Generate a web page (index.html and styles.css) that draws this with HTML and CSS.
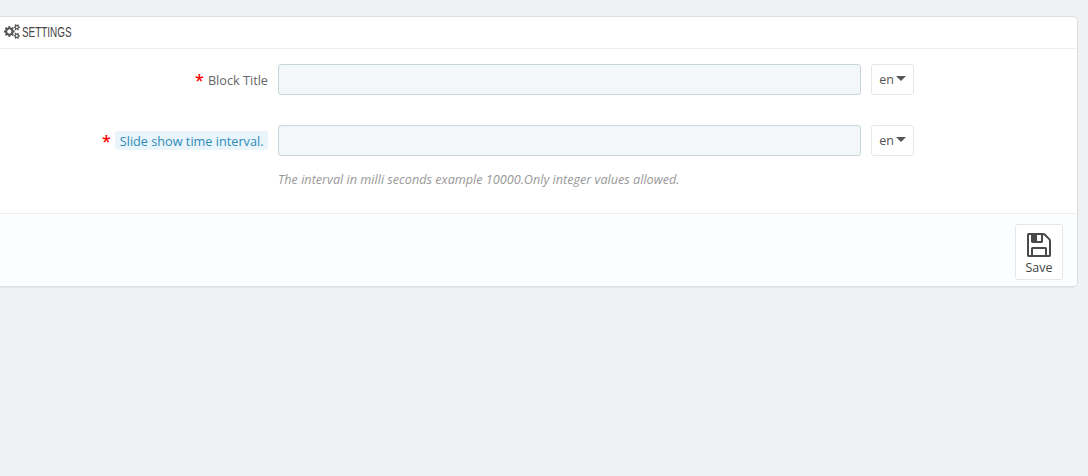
FILE: index.html
```html
<!DOCTYPE html>
<html lang="en">
<head>
<meta charset="utf-8">
<title>Settings</title>
<link rel="stylesheet" href="styles.css">
</head>
<body>
<div class="panel">
  <div class="panel-heading">
    <svg class="icon-cogs" viewBox="0 0 1920 1792" aria-hidden="true"><path fill-rule="evenodd" d="M896 896q0-106-75-181t-181-75-181 75-75 181 75 181 181 75 181-75 75-181zm768 512q0-52-38-90t-90-38-90 38-38 90q0 53 37.500 90.500t90.500 37.500 90.500-37.500 37.500-90.500zm0-1024q0-52-38-90t-90-38-90 38-38 90q0 53 37.500 90.500t90.500 37.500 90.500-37.500 37.500-90.500zm-384 421v185q0 10-7 19.500t-16 10.500l-155 24q-11 35-32 76 34 48 90 115 7 11 7 20 0 12-7 19-23 30-82.500 89.500t-78.500 59.500q-11 0-21-7l-115-90q-37 19-77 31-11 108-23 155-7 24-30 24h-186q-11 0-20-7.500t-10-17.500l-23-153q-34-10-75-31l-118 89q-7 7-20 7-11 0-21-8-144-133-144-160 0-9 7-19 10-14 41-53t47-61q-23-44-35-82l-152-24q-10-1-17-9.500t-7-19.500v-185q0-10 7-19.500t16-10.500l155-24q11-35 32-76-34-48-90-115-7-11-7-20 0-12 7-20 22-30 82-89t79-59q11 0 21 7l115 90q34-18 77-32 11-108 23-154 7-24 30-24h186q11 0 20 7.500t10 17.500l23 153q34 10 75 31l118-89q8-7 20-7 11 0 21 8 144 133 144 160 0 8-7 19-12 16-42 54t-45 60q23 48 34 82l152 23q10 2 17 10.500t7 19.500zm640 533v140q0 16-149 31-12 27-30 52 51 113 51 138 0 4-4 7-122 71-124 71-8 0-46-47t-52-68q-20 2-30 2t-30-2q-14 21-52 68t-46 47q-2 0-124-71-4-3-4-7 0-25 51-138-18-25-30-52-149-15-149-31v-140q0-16 149-31 13-29 30-52-51-113-51-138 0-4 4-7 4-2 35-20t59-34 30-16q8 0 46 46.500t52 67.500q20-2 30-2t30 2q51-71 92-112l6-2q4 0 124 70 4 3 4 7 0 25-51 138 17 23 30 52 149 15 149 31zm0-1024v140q0 16-149 31-12 27-30 52 51 113 51 138 0 4-4 7-122 71-124 71-8 0-46-47t-52-68q-20 2-30 2t-30-2q-14 21-52 68t-46 47q-2 0-124-71-4-3-4-7 0-25 51-138-18-25-30-52-149-15-149-31v-140q0-16 149-31 13-29 30-52-51-113-51-138 0-4 4-7 4-2 35-20t59-34 30-16q8 0 46 46.500t52 67.500q20-2 30-2t30 2q51-71 92-112l6-2q4 0 124 70 4 3 4 7 0 25-51 138 17 23 30 52 149 15 149 31z"/></svg>
    <span class="heading-text">SETTINGS</span>
  </div>
  <div class="form-body">
    <div class="form-row">
      <label class="form-label"><span class="req">*</span><span>Block Title</span></label>
      <input class="form-input" type="text">
      <button class="lang-btn" type="button">en<span class="caret"></span></button>
    </div>
    <div class="form-row">
      <label class="form-label"><span class="req">*</span><span class="hint-label">Slide show time interval.</span></label>
      <input class="form-input" type="text">
      <button class="lang-btn" type="button">en<span class="caret"></span></button>
      <p class="help">The interval in milli seconds example 10000.Only integer values allowed.</p>
    </div>
  </div>
  <div class="panel-footer">
    <button class="save-btn" type="button">
      <svg class="icon-save" viewBox="128 128 1536 1536" aria-hidden="true"><path d="M512 1536h768v-384h-768v384zm896 0h128v-896q0-14-10-38.500t-20-34.500l-281-281q-10-10-34-20t-39-10v416q0 40-28 68t-68 28h-576q-40 0-68-28t-28-68v-416h-128v1280h128v-416q0-40 28-68t68-28h832q40 0 68 28t28 68v416zm-384-928v-320q0-13-9.500-22.500t-22.500-9.500h-192q-13 0-22.500 9.500t-9.500 22.500v320q0 13 9.500 22.500t22.500 9.500h192q13 0 22.500-9.500t9.500-22.500zm640 32v928q0 40-28 68t-68 28h-1344q-40 0-68-28t-28-68v-1344q0-40 28-68t68-28h928q40 0 88 20t76 48l280 280q28 28 48 76t20 88z"/></svg>
      <span>Save</span>
    </button>
  </div>
</div>
</body>
</html>
```
FILE: styles.css
```css
* { box-sizing: border-box; }
html, body { height: 100%; }
body {
  margin: 0;
  padding-top: 16px;
  background: #eff1f2;
  font-family: "Open Sans", sans-serif;
  font-size: 12px;
  color: #555;
  overflow: hidden;
}
.panel {
  margin: 0 10px 0 -10px;
  height: 271px;
  background: #fff;
  border: 1px solid #dcdfe2;
  border-radius: 5px;
  box-shadow: 0 1px 0 rgba(0,0,0,0.04);
  display: flex;
  flex-direction: column;
  overflow: hidden;
}
.panel-heading {
  height: 32px;
  flex: none;
  border-bottom: 1px solid #eeeeee;
  display: flex;
  align-items: center;
  padding: 0 0 2px 13px;
  gap: 2px;
  color: #555;
}
.icon-cogs { width: 16px; height: 15px; fill: #555; flex: none; }
.heading-text {
  font-family: "Liberation Sans", sans-serif;
  font-size: 15px;
  line-height: 14px;
  color: #444;
  transform: scaleX(0.66);
  transform-origin: left center;
}
.form-body { flex: 1; padding-top: 15px; }
.form-row {
  display: grid;
  grid-template-columns: 277px 583px 43px;
  column-gap: 10px;
  align-items: center;
  margin-bottom: 30px;
}
.form-row:last-child { margin-bottom: 0; }
.form-label {
  display: flex;
  justify-content: flex-end;
  align-items: center;
  gap: 4px;
  font-size: 12.700px;
  color: #666;
}
.req { color: #f00; font-size: 16px; line-height: 16px; height: 15px; font-weight: 600; }
.hint-label {
  background: #e9f5fb;
  color: #2e8bb8;
  border-radius: 3px;
  padding: 1px 4.500px 0 5px;
  line-height: 18px;
}
.form-input {
  height: 31px;
  background: #f3f7f8;
  border: 1px solid #c7d6db;
  border-radius: 3px;
  padding: 0 8px;
}
.lang-btn {
  height: 31px;
  width: 43px;
  background: #fff;
  border: 1px solid #e6e6e6;
  border-radius: 3px;
  font-family: "Open Sans", sans-serif;
  font-size: 12.500px;
  color: #555;
  padding: 0;
  display: flex;
  justify-content: center;
  align-items: center;
  gap: 2px;
}
.caret {
  width: 0;
  height: 0;
  border-left: 5px solid transparent;
  border-right: 5px solid transparent;
  border-top: 5px solid #555;
  margin-top: -2px;
}
.help {
  grid-column: 2;
  margin: 14px 0 0;
  font-size: 12.650px;
  line-height: 18px;
  font-style: italic;
  color: #999;
}
.panel-footer {
  height: 73px;
  flex: none;
  background: #fcfdfe;
  border-top: 1px solid #eeeeee;
  padding: 10px 14px 0 0;
  display: flex;
  justify-content: flex-end;
  align-items: flex-start;
}
.save-btn {
  width: 48px;
  height: 56px;
  background: #fff;
  border: 1px solid #e6e6e6;
  border-radius: 3px;
  padding: 8px 0 0;
  display: flex;
  flex-direction: column;
  align-items: center;
  gap: 2px;
  font-family: "Open Sans", sans-serif;
  font-size: 12.500px;
  line-height: 17px;
  color: #444;
}
.icon-save { width: 24px; height: 24px; fill: #4a4a4a; flex: none; }
```
